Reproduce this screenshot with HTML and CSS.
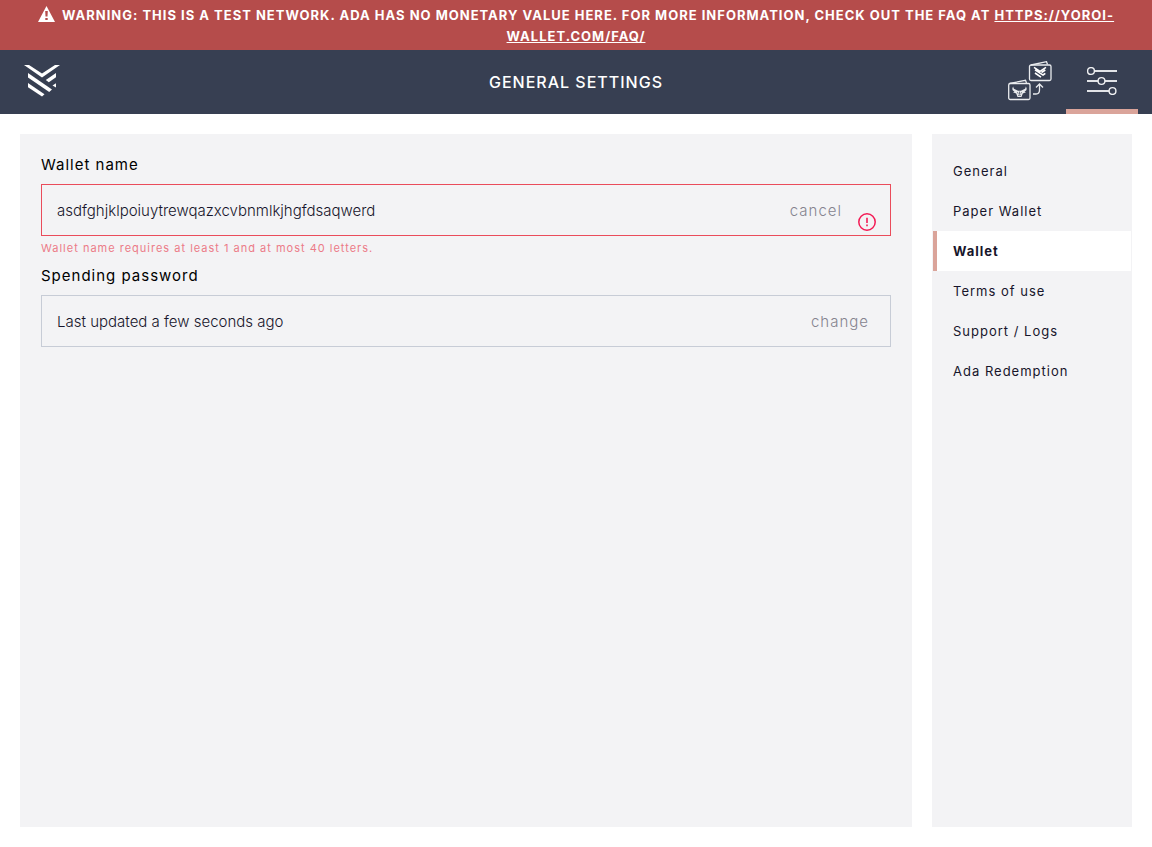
FILE: index.html
```html
<!DOCTYPE html>
<html lang="en">
<head>
<meta charset="utf-8">
<meta name="viewport" content="width=device-width, initial-scale=1">
<title>General Settings</title>
<link rel="stylesheet" href="styles.css">
</head>
<body>
<div class="app">
  <div class="banner" role="alert">
    <svg class="banner-icon" viewBox="0 0 17 16" aria-hidden="true"><path fill="#fff" fill-rule="evenodd" d="M8.500 0 17 16H0ZM7.200 5 7.500 10.500H9.500L9.800 5ZM7.300 12V14H9.700V12Z"/></svg>
    WARNING: THIS IS A TEST NETWORK. ADA HAS NO MONETARY VALUE HERE. FOR MORE INFORMATION, CHECK OUT THE FAQ AT <a class="banner-link" href="https://yoroi-wallet.com/faq/">HTTPS://YOROI-WALLET.COM/FAQ/</a>
  </div>
  <header class="topbar">
    <a class="logo" href="#" aria-label="Yoroi">
      <svg viewBox="0 0 36 32" width="36" height="32" fill="#fff" aria-hidden="true">
        <path d="M0 0H5L18 8.500 31 0H36L18 12.500Z"/>
        <path d="M4 8 28 24.500 25.200 27 4 12.500Z"/>
        <path d="M4 18 20.500 29.200 18 31.500 4 22.200Z"/>
        <path d="M32 8V12.300L24.800 17.300 21.800 15Z"/>
        <path d="M32 18.200V22.500L28.500 20.500Z"/>
      </svg>
    </a>
    <h1 class="title">GENERAL SETTINGS</h1>
    <nav class="actions" aria-label="Main">
      <a class="action" href="#" aria-label="Wallets">
        <svg viewBox="0 0 44 40" width="44" height="40" fill="none" stroke="#e9ebee" stroke-width="1.300" aria-hidden="true">
          <rect x="21.500" y="4" width="21.500" height="15.500" rx="1.500"/>
          <path d="M23 4 38.500.7 39.500 3.500M1.500 22.500 17.500 19.300 18.500 22"/>
          <rect x=".7" y="22.500" width="21.300" height="16" rx="1.500"/>
          <path stroke="#fff" stroke-width="1.600" d="M26 6.300 32 10.300 38 6.300M27 8.800 35.500 14.300M27 12 33 16.200M37.300 9 33.500 11.500M37.300 12.300 35 14"/>
          <path d="M25 33H28Q31.500 33 31.500 29V23.500M28 26.500 31.500 23 35 26.500"/>
          <path fill="#e9ebee" stroke="none" d="M5.300 25.300Q4.800 28.300 8 28.800L10 29.800H13L15 28.800Q18.200 28.300 17.700 25.300 20.200 29.200 16.500 30.500L18 31.300 14.800 32.500 13.500 36H9.500L8.200 32.500 5 31.300 6.500 30.500Q2.800 29.200 5.300 25.300Z"/>
          <path stroke="#373f52" stroke-width=".7" d="M9 31.500 10.500 32.300M14 31.500 12.500 32.300M10 34.300H13M11.500 30.500V33.500"/>
        </svg>
      </a>
      <a class="action action-active" href="#" aria-label="Settings" aria-current="page">
        <svg viewBox="0 0 30 28" width="30" height="28" fill="none" stroke="#e1e3e7" aria-hidden="true">
          <path stroke-width="2" d="M8 4H30M0 14H11M18 14H30M0 24H22"/>
          <g stroke="#f0f1f3" stroke-width="1.400"><circle cx="4" cy="4" r="3.400"/><circle cx="14.500" cy="14" r="3.400"/><circle cx="25.500" cy="24" r="3.400"/></g>
        </svg>
      </a>
    </nav>
  </header>
  <div class="content">
    <main class="panel">
      <label class="label" for="wallet-name">Wallet name</label>
      <div class="field field-error">
        <input class="input" id="wallet-name" type="text" value="asdfghjklpoiuytrewqazxcvbnmlkjhgfdsaqwerd" aria-invalid="true" aria-describedby="name-error">
        <button class="field-button" type="button">cancel</button>
        <svg class="error-icon" viewBox="0 0 18 18" width="18" height="18" fill="none" stroke="#f31b55" aria-hidden="true"><circle cx="9" cy="9" r="8.200" stroke-width="1.500"/><path stroke-width="1.600" d="M9 4.700V10M9 11.500V13.200"/></svg>
      </div>
      <p class="error" id="name-error">Wallet name requires at least 1 and at most 40 letters.</p>
      <label class="label" for="spending-password">Spending password</label>
      <div class="field">
        <input class="input" id="spending-password" type="text" value="Last updated a few seconds ago" readonly>
        <button class="field-button" type="button">change</button>
      </div>
    </main>
    <nav class="menu" aria-label="Settings">
      <a class="menu-item" href="#">General</a>
      <a class="menu-item" href="#">Paper Wallet</a>
      <a class="menu-item menu-active" href="#" aria-current="page">Wallet</a>
      <a class="menu-item" href="#">Terms of use</a>
      <a class="menu-item" href="#">Support / Logs</a>
      <a class="menu-item" href="#">Ada Redemption</a>
    </nav>
  </div>
</div>
</body>
</html>
```
FILE: styles.css
```css
* {
  box-sizing: border-box;
}

body {
  margin: 0;
  background: #fff;
  color: #17152b;
  font-family: Inter, "Liberation Sans", sans-serif;
}

.app {
  display: flex;
  flex-direction: column;
  min-height: 100vh;
}

.banner {
  padding: 5px 20px 3px;
  background: #b54c4b;
  color: #fff;
  font-size: 13px;
  font-weight: 700;
  line-height: 21px;
  letter-spacing: 1px;
  text-align: center;
}

.banner-icon {
  width: 17px;
  height: 16px;
  margin-right: 3px;
  vertical-align: -2px;
}

.banner-link {
  color: inherit;
}

.topbar {
  display: grid;
  grid-template-columns: 1fr auto 1fr;
  height: 64px;
  padding: 0 14px;
  background: #373f52;
}

.logo {
  justify-self: start;
  padding: 15px 0 0 10px;
}

.title {
  align-self: center;
  margin: 0;
  color: #fff;
  font-size: 16px;
  font-weight: 500;
  line-height: 24px;
  letter-spacing: 1px;
}

.actions {
  display: flex;
  justify-self: end;
}

.action {
  display: flex;
  align-items: center;
  justify-content: center;
  width: 72px;
  border-bottom: 5px solid transparent;
  padding-top: 3px;
}

.action-active {
  border-color: #daa49a;
}

.content {
  display: flex;
  flex: 1;
  gap: 20px;
  padding: 20px;
}

.panel {
  flex: 1;
  padding: 20px 21px;
  background: #f3f3f5;
}

.label {
  display: block;
  margin-bottom: 8px;
  color: #000;
  font-size: 15px;
  line-height: 22px;
  letter-spacing: 1px;
}

.field {
  display: flex;
  align-items: center;
  height: 52px;
  border: 1px solid #c7ccd6;
  padding: 0 21px 0 15px;
}

.field-error {
  border-color: #ea4c5b;
  padding-right: 14px;
}

.input {
  flex: 1;
  min-width: 0;
  border: 0;
  padding: 0;
  background: transparent;
  color: #17152b;
  font-family: inherit;
  font-size: 15px;
  font-weight: 300;
  outline: 0;
}

.field-button {
  border: 0;
  padding: 0;
  background: transparent;
  color: #85838f;
  font-family: inherit;
  font-size: 15px;
  font-weight: 300;
  letter-spacing: 1px;
}

.error-icon {
  align-self: flex-end;
  margin: 0 0 4px 16px;
}

.error {
  margin: 4px 0 8px;
  color: #ec7b88;
  font-size: 11px;
  line-height: 17px;
  letter-spacing: 1px;
}

.menu {
  width: 200px;
  padding: 17px 1px;
  background: #f3f3f5;
}

.menu-item {
  display: block;
  border-left: 4px solid transparent;
  padding-left: 16px;
  color: #17152b;
  font-size: 13px;
  line-height: 40px;
  letter-spacing: 1px;
  text-decoration: none;
}

.menu-active {
  border-color: #daa49a;
  background: #fff;
  font-weight: 700;
}
```
